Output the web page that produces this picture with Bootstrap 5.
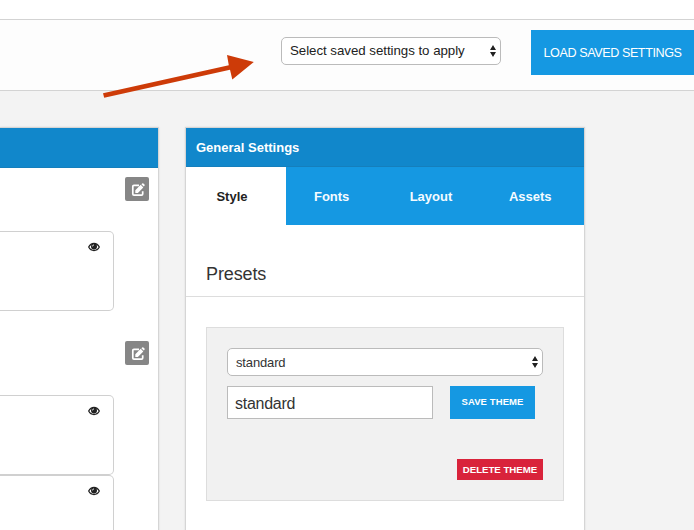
<!DOCTYPE html>
<html lang="en">
<head>
<meta charset="utf-8">
<meta name="viewport" content="width=device-width, initial-scale=1">
<title>Theme settings</title>
<link rel="stylesheet" href="https://cdn.jsdelivr.net/npm/bootstrap@5.3.0/dist/css/bootstrap.min.css">
<style>
body{width:694px;height:530px;background:#f3f3f3;font-family:"Liberation Sans",Arial,sans-serif;font-size:13px;color:#222}
.topstrip{height:20px;background:#fff;border-bottom:1px solid #d3d3d3}
.toolbar{height:71px;background:#fdfdfd;border-bottom:1px solid #d3d3d3;padding-top:10px}
.picker{appearance:none;height:28px;border:1px solid #bbb;border-radius:5px;padding:1px 14px 0 8px;line-height:25px;font-size:13px;letter-spacing:-.15px;color:#333;background:#fff url("data:image/svg+xml,%3Csvg xmlns='http://www.w3.org/2000/svg' viewBox='0 0 6 12'%3E%3Cpath fill='%23222' d='M3 0L6 5H0zM3 12L0 7h6z'/%3E%3C/svg%3E") no-repeat right 4px center/6px 12px}
.saved{width:220px;padding:0 14px 1px 8px;margin-top:7px;margin-right:30px;font-size:13.3px;letter-spacing:-.04px;color:#222}
.btn-flat{border:0;border-radius:0;background:#1598e2;color:#fff;padding:0;white-space:nowrap}
.load{width:163px;height:45px;padding-top:2px;font-size:12.6px;letter-spacing:-.42px}
.workspace{height:403px;padding-top:36px}
.panel{background:#fff;border:1px solid #d5d5d5;border-bottom:0;box-shadow:0 0 2px rgba(0,0,0,.1);height:410px}
.left-panel{width:159px;border-left:0;margin-right:26px}
.right-panel{width:400px}
.panel-title{background:#1187cb;height:39px;color:#fff;font-weight:700;border-bottom:1px solid #157fbc;padding:2px 0 0 10px}
.left-panel .panel-title{height:40px}
.edit{width:24px;height:24px;border-radius:2px;background:#868686;margin:9px 9px 0 auto;border:0;padding:1px 0 0 1px}
.block{width:114px;height:80px;border:1px solid #d0d0d0;border-left:0;border-radius:0 5px 5px 0;margin-top:30px;padding:9px 13px 0 0}
.block + .edit{margin-top:30px}
.block + .block{margin-top:0}
.tabs{height:58px;background:#1598e2}
.tabs .nav-link{width:99.3px;height:58px;padding:2px 8px 0 0;border-radius:0;color:#f4fbff;font-weight:700}
.tabs .nav-link.active{width:100px;background:#fff;color:#222}
.presets{height:72px;padding:38px 20px 0;font-size:18px;line-height:22px;letter-spacing:-.12px;color:#333;border-bottom:1px solid #ddd;margin:0;font-weight:400}
.well-box{margin:30px 20px 0;height:174px;background:#f1f1f1;border:1px solid #ddd;padding:20px}
.name-row{margin-top:10px}
.theme-name{width:206px;height:33px;border:1px solid #bbb;border-radius:0;padding:2px 7px 0;font-size:16px;color:#333;background:#fff;letter-spacing:-.27px}
.save{width:85px;height:33px;font-size:9.5px;letter-spacing:.1px;font-weight:700;margin-left:17px}
.delete{width:86px;height:21px;padding-top:1px;background:#d9233b;font-size:9.7px;letter-spacing:-.03px;font-weight:700}
.pointer{left:0;top:0;pointer-events:none}
</style>
</head>
<body class="position-relative overflow-hidden">
<svg class="d-none"><defs>
  <symbol id="pencil" viewBox="0 0 14 14"><path d="M8 2.300H3Q1.800 2.300 1.800 3.500V11Q1.800 12.200 3 12.200H10.500Q11.700 12.200 11.700 11V8.200" fill="none" stroke="#fff" stroke-width="1.700"/><path d="M4.300 9.900V7.200L9.700 1.800L12.300 4.400L6.900 9.900zM10.400 1.200L11.200.4Q11.800 0 12.400.5L13.500 1.600Q13.900 2.200 13.500 2.800L12.800 3.600z" fill="#fff"/></symbol>
  <symbol id="eye" viewBox="0 0 12 12"><path d="M.7 6Q2.500 2.500 6 2.500T11.300 6Q9.500 9.500 6 9.500T.7 6z" fill="none" stroke="#222" stroke-width="1.300"/><circle cx="6" cy="5.600" r="3" fill="#222"/><path d="M4.500 5.400Q4.500 4 5.900 3.900" fill="none" stroke="#fff" stroke-width=".9"/></symbol>
</defs></svg>
<div class="topstrip"></div>
<header class="toolbar d-flex justify-content-end align-items-start">
  <select class="picker saved" aria-label="Saved settings"><option>Select saved settings to apply</option></select>
  <button class="btn btn-flat load">LOAD SAVED SETTINGS</button>
</header>
<main class="workspace d-flex align-items-start">
  <section class="panel left-panel">
    <div class="panel-title"></div>
    <button class="edit d-flex align-items-center justify-content-center" aria-label="Edit"><svg width="14" height="14"><use href="#pencil"/></svg></button>
    <div class="block d-flex justify-content-end align-items-start"><svg width="12" height="12"><use href="#eye"/></svg></div>
    <button class="edit d-flex align-items-center justify-content-center" aria-label="Edit"><svg width="14" height="14"><use href="#pencil"/></svg></button>
    <div class="block d-flex justify-content-end align-items-start"><svg width="12" height="12"><use href="#eye"/></svg></div>
    <div class="block d-flex justify-content-end align-items-start"><svg width="12" height="12"><use href="#eye"/></svg></div>
  </section>
  <section class="panel right-panel">
    <div class="panel-title d-flex align-items-center">General Settings</div>
    <nav class="tabs nav flex-nowrap">
      <a class="nav-link active d-flex align-items-center justify-content-center" href="#">Style</a>
      <a class="nav-link d-flex align-items-center justify-content-center" href="#">Fonts</a>
      <a class="nav-link d-flex align-items-center justify-content-center" href="#">Layout</a>
      <a class="nav-link d-flex align-items-center justify-content-center" href="#">Assets</a>
    </nav>
    <h2 class="presets">Presets</h2>
    <div class="well-box d-flex flex-column">
      <select class="picker w-100" aria-label="Preset"><option>standard</option></select>
      <div class="d-flex name-row">
        <input class="theme-name" value="standard" aria-label="Theme name">
        <button class="btn btn-flat save">SAVE THEME</button>
      </div>
      <button class="btn btn-flat delete ms-auto mt-auto">DELETE THEME</button>
    </div>
  </section>
</main>
<svg class="pointer position-absolute" width="270" height="110" viewBox="0 0 270 110"><path d="M103 93.200L228.800 65.300L227 55L253.800 62L232.300 79.500L230 69.700L104.200 97.800z" fill="#cd3b08"/></svg>
<script src="https://cdn.jsdelivr.net/npm/bootstrap@5.3.0/dist/js/bootstrap.bundle.min.js"></script>
</body>
</html>
